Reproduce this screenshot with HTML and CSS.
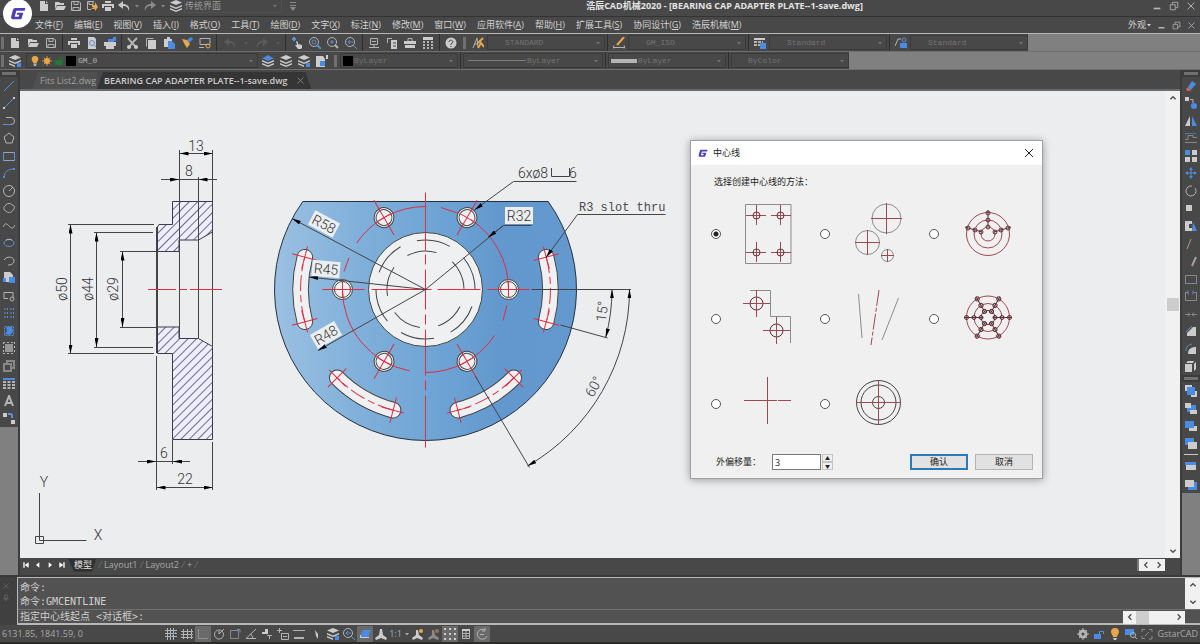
FILE: index.html
```
<!DOCTYPE html>
<html lang="zh-CN">
<head>
    <meta charset="UTF-8">
    <meta name="viewport" content="width=device-width, initial-scale=1.0">
    <title>浩辰CAD机械2020</title>
    <link rel="stylesheet" href="styles.css">
</head>
<body>
    <!-- Icon sprite, 12x12 grid -->
    <svg class="sprite" aria-hidden="true">
        <symbol id="i-new" viewBox="0 0 12 12"><path class="l" d="M2 1h5v3h3v7H2z"/><path class="l" d="M8 1l2 2H8z"/></symbol>
        <symbol id="i-open" viewBox="0 0 12 12"><path class="l" d="M1 2h4l1 1h4v2H3L1 9z"/><path class="l" d="M3 6h9l-2 4H1z"/></symbol>
        <symbol id="i-save" viewBox="0 0 12 12"><path class="sl" d="M1.500 1.500h7.500l1.500 1.500v7.500h-9zM4 1.500v3h4v-3M3 10.500V7.500h6v3"/></symbol>
        <symbol id="i-saveas" viewBox="0 0 12 12"><path class="sl" d="M8 1.500H1.500v8H5M3 1.500v3h4v-3"/><path class="o" d="M6 7V5h3V2l3 5-3 4V9H5l3-2z"/></symbol>
        <symbol id="i-print" viewBox="0 0 12 12"><path class="l" d="M3 1h6v2H3zM0 4h12v4h-2V6H2v2H0zM3 7h6v4H3z"/></symbol>
        <symbol id="i-preview" viewBox="0 0 12 12"><path class="l" d="M2 0h6l2 2v10H2z"/><circle class="sb" cx="6" cy="6" r="2.500"/><path class="sb" d="M8 8l2 2"/></symbol>
        <symbol id="i-publish" viewBox="0 0 12 12"><path class="l" d="M0 5h12v4H0zM2 9h8v3H2z"/><path class="b" d="M4 2h6v3H4zM9 0h3v4H9z"/></symbol>
        <symbol id="i-cut" viewBox="0 0 12 12"><path class="sl w2" d="M1 1l4 5 5-5M5 6l3 3M6 5L3 9"/><circle class="l" cx="2" cy="10" r="2"/><circle class="l" cx="9" cy="10" r="2"/></symbol>
        <symbol id="i-copy" viewBox="0 0 12 12"><path class="sl" d="M8.500 1.500h-7v8"/><path class="l" d="M3 3h8v9H3z"/></symbol>
        <symbol id="i-paste" viewBox="0 0 12 12"><path class="l" d="M1 2h3V0h3v2h2v8H1z"/><path class="b" d="M5 4h4l3 3v5H5z"/></symbol>
        <symbol id="i-match" viewBox="0 0 12 12"><path class="b" d="M6 3l4-3 2 2-4 4z"/><path class="o" d="M1 2l5 1 3 4-3 4-2-3z"/></symbol>
        <symbol id="i-block" viewBox="0 0 12 12"><path class="sl" d="M1 1.500h10v6H1zM0 10.500h5"/><circle class="so" cx="9" cy="9" r="2"/></symbol>
        <symbol id="i-undo" viewBox="0 0 12 12"><path class="f" d="M5 1L0 5l5 4V6c4 0 5 2 6 5 1-5-2-7-6-7z"/></symbol>
        <symbol id="i-redo" viewBox="0 0 12 12"><path class="f" d="M7 1l5 4-5 4V6C3 6 2 8 1 11 0 6 3 4 7 4z"/></symbol>
        <symbol id="i-caret" viewBox="0 0 12 12"><path class="f" d="M2 4h8L6 9z"/></symbol>
        <symbol id="i-pan" viewBox="0 0 12 12"><path class="sb w2" d="M1 2h4M3 0v4"/><path class="l" d="M5 4l2 1v2l4 1v3l-1 1H7L4 8h2z"/></symbol>
        <symbol id="i-zoom" viewBox="0 0 12 12"><circle class="sl" cx="5" cy="5" r="4.500"/><circle class="sb" cx="5" cy="5" r="2"/><path class="sb w2" d="M8 8l4 4"/></symbol>
        <symbol id="i-zoomwin" viewBox="0 0 12 12"><circle class="sl" cx="5" cy="5" r="4.500"/><path class="sl w2" d="M8 8l3 3"/><path class="sb" d="M3 5h4M5 3v4"/></symbol>
        <symbol id="i-zoomprev" viewBox="0 0 12 12"><circle class="sl" cx="5" cy="5" r="4.500"/><path class="sb" d="M3 5h5M5 3L3 5l2 2M8 8l4 4"/></symbol>
        <symbol id="i-props" viewBox="0 0 12 12"><path class="sl" d="M2.500 1.500h7v6h-7zM4 4.500h4M1 10.500h10M6 7v3"/></symbol>
        <symbol id="i-design" viewBox="0 0 12 12"><path class="sl" d="M1 1.500h5M1.500 1v5"/><path class="l" d="M5 3h6v9H5z"/><path class="sd" d="M7 6h3M7 9h3"/></symbol>
        <symbol id="i-toolbox" viewBox="0 0 12 12"><path class="l" d="M0 4h12v3H0zM1 8h10v3H1z"/><path class="sl" d="M4 4V1.500h4V4"/></symbol>
        <symbol id="i-calc" viewBox="0 0 12 12"><path class="l" d="M1 0h10v3H1z"/><path class="sl w2" d="M1 5h10M1 8h10M1 11h10" stroke-dasharray="2 2"/></symbol>
        <symbol id="i-help" viewBox="0 0 12 12"><circle class="l" cx="6" cy="6" r="5.500"/><path class="sd" d="M4 5c0-3 4-2 4 0L6 7v1M6 9v1"/></symbol>
        <symbol id="i-textstyle" viewBox="0 0 12 12"><path class="sl" d="M1 11L5 1l1 9M2 7h4"/><path class="so w2" d="M6 6l5-5M6 11l3-5 3 4"/></symbol>
        <symbol id="i-dimstyle" viewBox="0 0 12 12"><path class="so w2" d="M11 0L4 8"/><path class="sl" d="M0 10.500h12M1 8.500l-1 2 1 1M11 8.500l1 2-1 1"/></symbol>
        <symbol id="i-table" viewBox="0 0 12 12"><path class="b" d="M0 1h12v2H0z"/><path class="sl w2" d="M0 5h12M0 8h12M0 11h12" stroke-dasharray="3 1.500"/></symbol>
        <symbol id="i-tablestyle" viewBox="0 0 12 12"><path class="l" d="M0 1h11v2H0z"/><path class="sl w2" d="M0 5h9M0 8h9" stroke-dasharray="3 1"/><path class="b" d="M6 6h6v6H6z"/></symbol>
        <symbol id="i-mleader" viewBox="0 0 12 12"><path class="sl" d="M0 9l3-7h3"/><circle class="sb" cx="9" cy="3" r="2"/><path class="b" d="M5 6h7v5H5z"/></symbol>
        <symbol id="i-layers" viewBox="0 0 12 12"><path class="l" d="M6 0l6 2.500L6 5 0 2.500zM0 5l6 2.500L12 5v1.500L6 9 0 6.500zM0 8l6 2.500L12 8v1.500L6 12 0 9.500z"/></symbol>
        <symbol id="i-layerblue" viewBox="0 0 12 12"><path class="l" d="M0 5l6 2.500L12 5v1.500L6 9 0 6.500zM0 8l6 2.500L12 8v1.500L6 12 0 9.500z"/><path class="b" d="M6 0l3 2 3 1-6 3-6-3 3-1z"/></symbol>
        <symbol id="i-layerprops" viewBox="0 0 12 12"><path class="l" d="M6 0l6 2.500L6 5 0 2.500zM0 5l6 2.500L12 5v1.500L6 9 0 6.500zM0 8l6 2.500v1.500L0 9.500z"/><path class="b" d="M8 8h4v4H8z"/></symbol>
        <symbol id="i-layerfile" viewBox="0 0 12 12"><path class="l" d="M0 1h7l2 3v8H0zM10 0h2v4h-2z"/><path class="b" d="M4 6h5v5H4z"/></symbol>
        <symbol id="i-bulb" viewBox="0 0 12 12"><path class="o" d="M6 0c3 0 4 2 4 4S8 7 8 9H4c0-2-2-3-2-5s1-4 4-4z"/><path class="l" d="M4 10h4l-1 2H5z"/></symbol>
        <symbol id="i-sun" viewBox="0 0 12 12"><circle class="o" cx="6" cy="6" r="3.500"/><path class="so" d="M6 0v12M0 6h12M2 2l8 8M10 2l-8 8"/></symbol>
        <symbol id="i-lock" viewBox="0 0 12 12"><path class="g" d="M1 5h9v6H1z"/><path class="sg" d="M6 5V2.500h4.500V5"/></symbol>
        <symbol id="i-line" viewBox="0 0 12 12"><path class="sb" d="M1 11L11 1"/></symbol>
        <symbol id="i-xline" viewBox="0 0 12 12"><path class="sb" d="M1 11L11 1"/><path class="l" d="M0 10h2v2H0zM10 0h2v2h-2z"/></symbol>
        <symbol id="i-pline" viewBox="0 0 12 12"><path class="sb" d="M0 9.500h8"/><path class="sl" d="M3 2.500h5a3.500 3.500 0 010 7"/></symbol>
        <symbol id="i-polygon" viewBox="0 0 12 12"><path class="sl" d="M6 1l5 4-2 6H3L1 5z"/></symbol>
        <symbol id="i-rect" viewBox="0 0 12 12"><path class="sb" d="M.5 2.500h11v8H.5z"/><path class="sl dim" d="M.5 2.500h11M.5 10.500h11"/></symbol>
        <symbol id="i-arc" viewBox="0 0 12 12"><path class="sb" d="M1 11c0-6 4-9 10-9"/><path class="b" d="M0 9h2v2H0zM10 1h2v2h-2z"/></symbol>
        <symbol id="i-circle" viewBox="0 0 12 12"><circle class="sl" cx="6" cy="6" r="5.500"/><path class="sl" d="M6 6l4-4"/></symbol>
        <symbol id="i-cloud" viewBox="0 0 12 12"><path class="sl" d="M3 3c1-2 5-2 6 0 3 0 3 4 1 5-1 3-6 3-7 1-3-1-3-4 0-6z"/></symbol>
        <symbol id="i-spline" viewBox="0 0 12 12"><path class="sl" d="M0 7c2-5 4-3 6-1s4 4 6-1"/></symbol>
        <symbol id="i-ellipse" viewBox="0 0 12 12"><ellipse class="sb" cx="6" cy="6" rx="5" ry="3.500"/><path class="sl" d="M3 3c2-1 4-1 6 0"/></symbol>
        <symbol id="i-earc" viewBox="0 0 12 12"><path class="sl" d="M1 5c2-4 10-4 10 1 0 3-3 4-6 4"/></symbol>
        <symbol id="i-insert" viewBox="0 0 12 12"><path class="l" d="M1 0h6l3 3v7H1z"/><path class="b" d="M6 5h6v6H6zM0 6h3v4H0z"/></symbol>
        <symbol id="i-mkblock" viewBox="0 0 12 12"><path class="sl" d="M1 2.500h9v5M1 2.500v6h4"/><circle class="sl" cx="9" cy="9" r="2"/></symbol>
        <symbol id="i-points" viewBox="0 0 12 12"><path class="sb" d="M2 1v11M4.500 1v11M8 1v11M10.500 1v11" stroke-dasharray="2 2"/></symbol>
        <symbol id="i-hatch" viewBox="0 0 12 12"><path class="sb" d="M1.500 1.500h9v9h-9z" stroke-dasharray="2 1"/><path class="b" d="M3 2h6l1 5-3 3-5-1 2-3z"/></symbol>
        <symbol id="i-gradient" viewBox="0 0 12 12"><path class="l dim" d="M2 2h8v8H2z"/><path class="sl" d="M.5 0v12M11.500 0v12M0 .5h12M0 11.500h12" stroke-dasharray="2 2"/></symbol>
        <symbol id="i-region" viewBox="0 0 12 12"><path class="sl w2 dim" d="M1 4h7v7H1zM4 4V1h7v7H8"/></symbol>
        <symbol id="i-text" viewBox="0 0 12 12"><path class="sl w2" d="M2 11L6 1l4 10M3 8h6"/></symbol>
        <symbol id="i-move3" viewBox="0 0 12 12"><path class="l" d="M0 1h4v4H0zM8 8h4v4H8z"/><path class="sb w2" d="M5 2h3l1 1v3"/></symbol>
        <symbol id="i-erase" viewBox="0 0 12 12"><path class="b" d="M7 1l4 3-5 6-3-3z"/><path class="r" d="M3 7l3 3-1 1H2L1 9z"/></symbol>
        <symbol id="i-copyobj" viewBox="0 0 12 12"><path class="l" d="M0 0h4v4H0z"/><path class="sl" d="M5 2.500h3V6"/><circle class="b" cx="9" cy="9" r="3"/></symbol>
        <symbol id="i-mirror" viewBox="0 0 12 12"><path class="l" d="M5 1v10H0z"/><path class="b" d="M7 1v10h5z"/></symbol>
        <symbol id="i-offset" viewBox="0 0 12 12"><path class="sl dim" d="M0 10.500h12M0 7.500h3v-4h5v2h4"/><path class="sb dim" d="M0 4.500V1.500h11"/></symbol>
        <symbol id="i-array" viewBox="0 0 12 12"><path class="b" d="M0 0h5v5H0z"/><path class="l" d="M7 0h5v5H7zM0 7h5v5H0zM7 7h5v5H7z"/></symbol>
        <symbol id="i-move" viewBox="0 0 12 12"><path class="sb" d="M6 1v10M1 6h10"/><path class="b" d="M6 0l2 3H4zM6 12l2-3H4zM0 6l3-2v4zM12 6L9 4v4z"/></symbol>
        <symbol id="i-rotate" viewBox="0 0 12 12"><path class="sl" d="M3 2a5 5 0 107 1"/><path class="sl" d="M3 2a5 5 0 014-1"/></symbol>
        <symbol id="i-scale" viewBox="0 0 12 12"><path class="l" d="M1 3h6v6H1z"/></symbol>
        <symbol id="i-stretch" viewBox="0 0 12 12"><path class="l" d="M0 1h7v3H4v4h3v3H0z"/><path class="b" d="M8 2l4 9H7z"/></symbol>
        <symbol id="i-trim" viewBox="0 0 12 12"><path class="sp" d="M2 11L6 1"/></symbol>
        <symbol id="i-extend" viewBox="0 0 12 12"><path class="sp w2" d="M7 11l4-9"/></symbol>
        <symbol id="i-break" viewBox="0 0 12 12"><path class="sl dim" d="M.5 2.500h11v8H.5z"/><path class="sb dim" d="M4 10.500h8"/></symbol>
        <symbol id="i-break2" viewBox="0 0 12 12"><path class="sl dim" d="M3 2.500H.5v8h11v-8H9"/><path class="sb" d="M3 .5v4M8 .5v4"/></symbol>
        <symbol id="i-join" viewBox="0 0 12 12"><path class="sl dim" d="M0 6.500h5M7 6.500h5M3 4.500l2 2-2 2M9 4.500l-2 2 2 2"/></symbol>
        <symbol id="i-chamfer" viewBox="0 0 12 12"><path class="l" d="M2 11V8l6-6h3v9z"/><path class="sb" d="M1 7l6-6"/></symbol>
        <symbol id="i-fillet" viewBox="0 0 12 12"><path class="l" d="M3 11c0-5 3-7 8-7v7z"/><path class="sb" d="M1 8c0-4 2-6 6-7"/></symbol>
        <symbol id="i-explode" viewBox="0 0 12 12"><path class="l" d="M0 4h7v8H0zM1 3l2-2h6L8 3zM9 4l2-2v7l-2 2z"/></symbol>
        <symbol id="i-front" viewBox="0 0 12 12"><path class="l" d="M0 0h7v6H0zM6 6h6v6H6z"/><path class="b" d="M2 2h8v8H2z"/></symbol>
        <symbol id="i-back" viewBox="0 0 12 12"><path class="b" d="M2 3h9v7H2z"/><path class="l" d="M0 1h6v5H0zM5 8h7v4H5z"/></symbol>
        <symbol id="i-above" viewBox="0 0 12 12"><path class="l" d="M4 6h8v5H4z"/><path class="b" d="M0 1h9v7H0z"/></symbol>
        <symbol id="i-below" viewBox="0 0 12 12"><path class="b" d="M0 1h9v7H0z"/><path class="l" d="M3 5h9v7H3z"/></symbol>
        <symbol id="i-textfront" viewBox="0 0 12 12"><path class="l" d="M1 5h10v5H1z"/><path class="b" d="M0 2h11v3H0z"/></symbol>
        <symbol id="i-hatchback" viewBox="0 0 12 12"><path class="b" d="M3 4h9v8H3z"/><path class="l" d="M0 2h9v7H0z"/></symbol>
        <symbol id="i-min" viewBox="0 0 12 12"><path class="sl w2" d="M2 9h8"/></symbol>
        <symbol id="i-restore" viewBox="0 0 12 12"><path class="sl" d="M1.500 4.500h6v6h-6zM4 4V1.500h6.500V8H8"/></symbol>
        <symbol id="i-close" viewBox="0 0 12 12"><path class="sc" d="M2 2l8 8M10 2l-8 8"/></symbol>
        <symbol id="i-up" viewBox="0 0 12 12"><path class="sc w2" d="M2 8l4-4 4 4"/></symbol>
        <symbol id="i-down" viewBox="0 0 12 12"><path class="sc w2" d="M2 4l4 4 4-4"/></symbol>
        <symbol id="i-left" viewBox="0 0 12 12"><path class="sc w2" d="M8 2L4 6l4 4"/></symbol>
        <symbol id="i-right" viewBox="0 0 12 12"><path class="sc w2" d="M4 2l4 4-4 4"/></symbol>
        <symbol id="i-first" viewBox="0 0 12 12"><path class="w" d="M2 2h2v8H2zM10 2v8L4 6z"/></symbol>
        <symbol id="i-prev" viewBox="0 0 12 12"><path class="w" d="M8 2v8L3 6z"/></symbol>
        <symbol id="i-next" viewBox="0 0 12 12"><path class="w" d="M4 2v8l5-4z"/></symbol>
        <symbol id="i-last" viewBox="0 0 12 12"><path class="w" d="M8 2h2v8H8zM2 2v8l6-4z"/></symbol>
        <symbol id="i-snap" viewBox="0 0 12 12"><path class="sl" d="M2.500 0v12M5.500 0v12M8.500 0v12M0 2.500h12M0 5.500h12M0 8.500h12"/><path class="sb" d="M6 9l5-5"/></symbol>
        <symbol id="i-grid" viewBox="0 0 12 12"><path class="sl" d="M2.500 1v10M6.500 1v10M10.500 1v10M0 3.500h12M0 6.500h12M0 9.500h12"/></symbol>
        <symbol id="i-ortho" viewBox="0 0 12 12"><path class="sf dim" d="M1.500 1v9.500H11"/></symbol>
        <symbol id="i-polar" viewBox="0 0 12 12"><circle class="sl" cx="6" cy="6.500" r="4.500"/><path class="sl" d="M6 6l5-5M6 6V3"/></symbol>
        <symbol id="i-osnap" viewBox="0 0 12 12"><path class="sl dim" d="M1.500 2.500h8v8h-8z"/><path class="sb" d="M8 1.500h3v3"/></symbol>
        <symbol id="i-angle" viewBox="0 0 12 12"><path class="sl" d="M11 1L1 10.500h10M6 6l2 4"/></symbol>
        <symbol id="i-track" viewBox="0 0 12 12"><path class="l" d="M4 1h3v5H1V4h3z"/><path class="sl" d="M6 7.500h5M8.500 7v4"/></symbol>
        <symbol id="i-dyn" viewBox="0 0 12 12"><path class="sl" d="M0 2.500h5M2.500 0v5M4.500 5.500h7v6h-7zM6 8.500h4"/></symbol>
        <symbol id="i-lwt" viewBox="0 0 12 12"><path class="sl" d="M0 2.500h12"/><path class="sl w2" d="M1 10h10"/></symbol>
        <symbol id="i-cursor" viewBox="0 0 12 12"><path class="l" d="M5 2l3 4v5L6 8z"/></symbol>
        <symbol id="i-cube" viewBox="0 0 12 12"><path class="b" d="M4 2h8l-2 4H2z"/><path class="l" d="M1 7h9v3H1z"/><path class="b" d="M2 5h8v4H2z"/></symbol>
        <symbol id="i-annot" viewBox="0 0 12 12"><path class="l" d="M5 1h2l1 6 4 3-1 2-5-2-5 2-1-2 4-3z"/></symbol>
        <symbol id="i-annoton" viewBox="0 0 12 12"><path class="l" d="M4 2h2l1 5 4 3-1 2-5-2-4 2-1-2 4-3z"/><circle class="o" cx="9" cy="3" r="2"/></symbol>
        <symbol id="i-dots" viewBox="0 0 12 12"><path class="l" d="M0 0h2v2H0zM5 0h2v2H5zM10 0h2v2h-2zM0 5h2v2H0zM5 5h2v2H5zM10 5h2v2h-2zM0 10h2v2H0zM5 10h2v2H5zM10 10h2v2h-2z"/></symbol>
        <symbol id="i-list" viewBox="0 0 12 12"><path class="sl" d="M2.500 2.500h7v8h-7zM2 5.500h8M2 8h8M6 3v7"/><path class="l" d="M2 1h8v2H2z"/></symbol>
        <symbol id="i-cycle" viewBox="0 0 12 12"><path class="sl" d="M9 2a5 5 0 102 6M9 0v3H6M4 6.500h4"/></symbol>
        <symbol id="i-gear" viewBox="0 0 12 12"><circle class="sl w3" cx="6" cy="6" r="3"/><path class="sl" d="M6 0v3M6 9v3M0 6h3M9 6h3M2 2l2 2M8 8l2 2M10 2L8 4M4 8l-2 2"/></symbol>
        <symbol id="i-unlock" viewBox="0 0 12 12"><path class="b" d="M1 6h7v5H1z"/><path class="sb" d="M6.500 6V3.500h4V6"/></symbol>
        <symbol id="i-find" viewBox="0 0 12 12"><path class="b" d="M0 1h9v6H0z"/><circle class="sl" cx="8" cy="7" r="2.500"/><path class="sl" d="M10 9l2 2"/></symbol>
        <symbol id="i-full" viewBox="0 0 12 12"><path class="sl dim" d="M1 4V1.500h3M8 1.500h3V4M11 8v3H8M4 10.500H1V8M4 8l4-4"/></symbol>
        <symbol id="i-more" viewBox="0 0 12 12"><path class="sf" d="M3 2.500h6M3 5.500h6"/><path class="f" d="M3 7h6l-3 4z"/></symbol>
        <symbol id="i-pin" viewBox="0 0 12 12"><path class="sf" d="M4 1.500h4V7H4zM2 7.500h8M6 7v4"/></symbol>
        <symbol id="i-logo" viewBox="0 0 24 20"><path d="M8 1h15l-1 4H9.500L7 14h6l1-3h-4l1-3h9l-3 10H5c-3 0-4-2-3-5l2-8c1-3 2-4 4-4z"/></symbol>
    </svg>

    <header class="title-bar">
        <span class="app-logo"><svg><use href="#i-logo"/></svg></span>
        <div class="quick-access">
            <button aria-label="新建"><svg><use href="#i-new"/></svg></button>
            <button aria-label="打开"><svg><use href="#i-open"/></svg></button>
            <button aria-label="保存"><svg><use href="#i-save"/></svg></button>
            <button aria-label="另存为"><svg><use href="#i-saveas"/></svg></button>
            <button aria-label="打印"><svg><use href="#i-print"/></svg></button>
            <button aria-label="放弃"><svg><use href="#i-undo"/></svg></button>
            <button class="drop off" aria-label="放弃列表"><svg><use href="#i-caret"/></svg></button>
            <button class="off" aria-label="重做"><svg><use href="#i-redo"/></svg></button>
            <button class="drop off" aria-label="重做列表"><svg><use href="#i-caret"/></svg></button>
            <button aria-label="工作空间"><svg><use href="#i-layers"/></svg></button>
            <span class="combo workspace">
                <select aria-label="界面"><option>传统界面</option></select>
                <svg><use href="#i-caret"/></svg>
            </span>
            <button class="off more" aria-label="更多"><svg><use href="#i-more"/></svg></button>
        </div>
        <h1>浩辰CAD机械2020 - [BEARING CAP ADAPTER PLATE--1-save.dwg]</h1>
        <div class="window-buttons">
            <button aria-label="最小化"><svg><use href="#i-min"/></svg></button>
            <button aria-label="还原"><svg><use href="#i-restore"/></svg></button>
            <button aria-label="关闭"><svg><use href="#i-close"/></svg></button>
        </div>
    </header>

    <nav class="menu-bar">
        <button>文件(<u>F</u>)</button>
        <button>编辑(<u>E</u>)</button>
        <button>视图(<u>V</u>)</button>
        <button>插入(<u>I</u>)</button>
        <button>格式(<u>O</u>)</button>
        <button>工具(<u>T</u>)</button>
        <button>绘图(<u>D</u>)</button>
        <button>文字(<u>X</u>)</button>
        <button>标注(<u>N</u>)</button>
        <button>修改(<u>M</u>)</button>
        <button>窗口(<u>W</u>)</button>
        <button>应用软件(<u>A</u>)</button>
        <button>帮助(<u>H</u>)</button>
        <button>扩展工具(<u>S</u>)</button>
        <button>协同设计(<u>G</u>)</button>
        <button>浩辰机械(<u>M</u>)</button>
        <span class="menu-right">
            <button class="look">外观<svg><use href="#i-caret"/></svg></button>
            <button class="mdi" aria-label="最小化文档"><svg><use href="#i-min"/></svg></button>
            <button class="mdi" aria-label="还原文档"><svg><use href="#i-restore"/></svg></button>
            <button class="mdi" aria-label="关闭文档"><svg><use href="#i-close"/></svg></button>
        </span>
    </nav>

    <div class="tool-row">
        <div class="tools">
            <i class="grip"></i>
            <button aria-label="新建"><svg><use href="#i-new"/></svg></button>
            <button aria-label="打开"><svg><use href="#i-open"/></svg></button>
            <button aria-label="保存"><svg><use href="#i-save"/></svg></button>
            <i class="sep"></i>
            <button aria-label="打印"><svg><use href="#i-print"/></svg></button>
            <button aria-label="打印预览"><svg><use href="#i-preview"/></svg></button>
            <button aria-label="发布"><svg><use href="#i-publish"/></svg></button>
            <i class="sep"></i>
            <button aria-label="剪切"><svg><use href="#i-cut"/></svg></button>
            <button aria-label="复制"><svg><use href="#i-copy"/></svg></button>
            <button aria-label="粘贴"><svg><use href="#i-paste"/></svg></button>
            <button aria-label="特性匹配"><svg><use href="#i-match"/></svg></button>
            <button aria-label="块编辑器"><svg><use href="#i-block"/></svg></button>
            <i class="sep"></i>
            <button class="wide faint" aria-label="放弃"><svg><use href="#i-undo"/></svg></button>
            <button class="drop faint" aria-label="放弃列表"><svg><use href="#i-caret"/></svg></button>
            <button class="wide faint" aria-label="重做"><svg><use href="#i-redo"/></svg></button>
            <button class="drop faint" aria-label="重做列表"><svg><use href="#i-caret"/></svg></button>
            <i class="sep"></i>
            <button aria-label="平移"><svg><use href="#i-pan"/></svg></button>
            <button aria-label="实时缩放"><svg><use href="#i-zoom"/></svg></button>
            <button aria-label="窗口缩放"><svg><use href="#i-zoomwin"/></svg></button>
            <button aria-label="缩放上一个"><svg><use href="#i-zoomprev"/></svg></button>
            <i class="sep"></i>
            <button aria-label="特性"><svg><use href="#i-props"/></svg></button>
            <button aria-label="设计中心"><svg><use href="#i-design"/></svg></button>
            <button aria-label="工具选项板"><svg><use href="#i-toolbox"/></svg></button>
            <button aria-label="计算器"><svg><use href="#i-calc"/></svg></button>
            <i class="sep"></i>
            <button aria-label="帮助"><svg><use href="#i-help"/></svg></button>
            <i class="grip"></i>
            <button aria-label="文字样式"><svg><use href="#i-textstyle"/></svg></button>
            <span class="combo style"><select aria-label="文字样式"><option>STANDARD</option></select><svg><use href="#i-caret"/></svg></span>
            <i class="sep"></i>
            <button aria-label="标注样式"><svg><use href="#i-dimstyle"/></svg></button>
            <span class="combo style"><select aria-label="标注样式"><option>GM_ISO</option></select><svg><use href="#i-caret"/></svg></span>
            <i class="sep"></i>
            <button aria-label="表格样式"><svg><use href="#i-tablestyle"/></svg></button>
            <span class="combo style"><select aria-label="表格样式"><option>Standard</option></select><svg><use href="#i-caret"/></svg></span>
            <i class="sep"></i>
            <button aria-label="引线样式"><svg><use href="#i-mleader"/></svg></button>
            <span class="combo style"><select aria-label="引线样式"><option>Standard</option></select><svg><use href="#i-caret"/></svg></span>
        </div>
    </div>

    <div class="tool-row">
        <div class="tools">
            <i class="grip"></i>
            <button aria-label="图层特性"><svg><use href="#i-layerprops"/></svg></button>
            <span class="combo layer">
                <svg class="state"><use href="#i-bulb"/></svg>
                <svg class="state"><use href="#i-sun"/></svg>
                <svg class="state"><use href="#i-lock"/></svg>
                <i class="swatch"></i>
                <select aria-label="图层"><option>GM_0</option></select>
                <svg><use href="#i-caret"/></svg>
            </span>
            <button aria-label="置为当前图层"><svg><use href="#i-layerblue"/></svg></button>
            <button aria-label="上一个图层"><svg><use href="#i-layers"/></svg></button>
            <button aria-label="图层状态"><svg><use href="#i-layerprops"/></svg></button>
            <button aria-label="图层转换"><svg><use href="#i-layerfile"/></svg></button>
            <i class="grip"></i>
            <span class="combo prop"><i class="swatch"></i><select aria-label="颜色"><option>ByLayer</option></select><svg><use href="#i-caret"/></svg></span>
            <i class="sep"></i>
            <span class="combo linetype"><i class="thin-line"></i><select aria-label="线型"><option>ByLayer</option></select><svg><use href="#i-caret"/></svg></span>
            <i class="sep"></i>
            <span class="combo prop"><i class="thick-line"></i><select aria-label="线宽"><option>ByLayer</option></select><svg><use href="#i-caret"/></svg></span>
            <i class="sep"></i>
            <span class="combo prop plot"><select aria-label="打印样式"><option>ByColor</option></select><svg><use href="#i-caret"/></svg></span>
        </div>
    </div>

    <main class="workspace-area">
        <aside class="side left">
            <i class="grip-h"></i>
            <div class="side-group draw">
                <button aria-label="直线"><svg><use href="#i-line"/></svg></button>
                <button aria-label="构造线"><svg><use href="#i-xline"/></svg></button>
                <button aria-label="多段线"><svg><use href="#i-pline"/></svg></button>
                <button aria-label="多边形"><svg><use href="#i-polygon"/></svg></button>
                <button aria-label="矩形"><svg><use href="#i-rect"/></svg></button>
                <button aria-label="圆弧"><svg><use href="#i-arc"/></svg></button>
                <button aria-label="圆"><svg><use href="#i-circle"/></svg></button>
                <button aria-label="修订云线"><svg><use href="#i-cloud"/></svg></button>
                <button aria-label="样条曲线"><svg><use href="#i-spline"/></svg></button>
                <button aria-label="椭圆"><svg><use href="#i-ellipse"/></svg></button>
                <button aria-label="椭圆弧"><svg><use href="#i-earc"/></svg></button>
                <button aria-label="插入块"><svg><use href="#i-insert"/></svg></button>
                <button aria-label="创建块"><svg><use href="#i-mkblock"/></svg></button>
                <button aria-label="点"><svg><use href="#i-points"/></svg></button>
                <button aria-label="图案填充"><svg><use href="#i-hatch"/></svg></button>
                <button aria-label="渐变色"><svg><use href="#i-gradient"/></svg></button>
                <button aria-label="面域"><svg><use href="#i-region"/></svg></button>
                <button aria-label="表格"><svg><use href="#i-table"/></svg></button>
                <button aria-label="多行文字"><svg><use href="#i-text"/></svg></button>
                <button aria-label="添加选定对象"><svg><use href="#i-move3"/></svg></button>
            </div>
        </aside>

        <section class="document">
            <div class="doc-tabs">
                <button class="doc-tab">Fits List2.dwg</button>
                <button class="doc-tab active">BEARING CAP ADAPTER PLATE--1-save.dwg<svg><use href="#i-close"/></svg></button>
            </div>

            <div class="canvas">
                <svg class="drawing" width="660" height="467" viewBox="20 91 660 467">
                    <defs>
                        <marker id="arrow" viewBox="0 0 9 4" refX="9" refY="2" markerWidth="9" markerHeight="4" markerUnits="userSpaceOnUse" orient="auto-start-reverse"><path d="M9 2L0 0v4z"/></marker>
                        <pattern id="hatch" width="6" height="6" patternUnits="userSpaceOnUse" patternTransform="rotate(45)"><rect width="6" height="6" fill="#eeeefa"/><path d="M.5 0v6" stroke="#6c6c8c"/></pattern>
                        <linearGradient id="plate"><stop offset="0" stop-color="#9bc0e2"/><stop offset=".28" stop-color="#80b0da"/><stop offset=".55" stop-color="#6da3d4"/><stop offset=".75" stop-color="#6398ce"/><stop offset="1" stop-color="#6499cf"/></linearGradient>
                        <g id="slot">
                            <path class="void" d="M128.200 -34.300A132.700 132.700 0 0 1 128.200 34.300A7.800 7.800 0 0 1 113.100 30.300A117.100 117.100 0 0 0 113.100 -30.300A7.800 7.800 0 0 1 128.200 -34.300Z"/>
                            <path class="red" d="M120.700 -32.300A125 125 0 0 1 120.700 32.300" stroke-dasharray="16 4 7 4"/>
                            <path class="red" d="M112 0h26M125 -12v23" transform="rotate(15)"/>
                            <path class="red" d="M112 0h26M125 -11v23" transform="rotate(-15)"/>
                        </g>
                        <g id="hole">
                            <circle class="void" cx="83" r="10"/>
                            <circle class="void" cx="83" r="8"/>
                            <path class="red" d="M63 0h40M83 -8v16"/>
                        </g>
                    </defs>

                    <!-- Side section -->
                    <path class="cut" d="M172.500 201.500h40V232l-14 8H179v11.500h-21.500V227l1.500-2.500h13.500z"/>
                    <path class="cut" d="M157.500 327H179v11.500h19.500l14 8v93h-40v-86h-15z"/>
                    <path class="ink" d="M156.500 227v126M157.500 251v76M179.500 150v188M198.500 177v161M212.500 150v196"/>
                    <path class="red" d="M148 289.500h28M179 289.500h8M190 289.500h32"/>

                    <!-- Side dimensions -->
                    <path class="ink ends" d="M179.500 153.500H212.500"/>
                    <path class="ink end" d="M161 179.500H179"/>
                    <path class="ink end" d="M217 179.500H198.500"/>
                    <path class="ink" d="M179 179.500h20"/>
                    <path class="ink ends" d="M70.500 224.500V353.500"/>
                    <path class="ink ends" d="M96.500 232.500V347"/>
                    <path class="ink ends" d="M122.500 251.500V327"/>
                    <path class="ink" d="M68 224.500h86M68 353.500h86M94 232.500h59M94 347.500h59M120 251.500h38M120 327.500h38"/>
                    <path class="ink end" d="M138 461.500h18"/>
                    <path class="ink end" d="M190 461.500h-17"/>
                    <path class="ink" d="M156 461.500h17"/>
                    <path class="ink ends" d="M156.500 487.500h56"/>
                    <path class="ink" d="M156.500 356v134M172.500 440v24M212.500 442v48"/>
                    <text x="196" y="151">13</text>
                    <text x="189" y="176">8</text>
                    <text x="164" y="458">6</text>
                    <text x="185" y="484">22</text>
                    <text transform="translate(67 289) rotate(-90)">ø50</text>
                    <text transform="translate(93 289) rotate(-90)">ø44</text>
                    <text transform="translate(118 289) rotate(-90)">ø29</text>

                    <!-- Front view, origin at the bore centre -->
                    <g transform="translate(425.500 289.500)">
                        <path d="M-122.700 -88H122.700A151 151 0 1 1 -122.700 -88Z" fill="url(#plate)" stroke="#26303c"/>
                        <circle class="void" r="57"/>
                        <circle class="ink" r="49.500" stroke-dasharray="34 17.800" transform="rotate(-100)"/>
                        <circle class="ink" r="38.500" stroke-dasharray="30 18.400" transform="rotate(-118)"/>
                        <use href="#slot"/>
                        <use href="#slot" transform="rotate(60)"/>
                        <use href="#slot" transform="rotate(120)"/>
                        <use href="#slot" transform="rotate(180)"/>
                        <use href="#hole"/>
                        <use href="#hole" transform="rotate(60)"/>
                        <use href="#hole" transform="rotate(120)"/>
                        <use href="#hole" transform="rotate(180)"/>
                        <use href="#hole" transform="rotate(240)"/>
                        <use href="#hole" transform="rotate(300)"/>
                        <path class="red" d="M-68.800 -46.400A83 83 0 0 1 0 -83M-81.500 -18L-76.500 -31.700M-83 0A83 83 0 0 0 -16 81.400M0 83A83 83 0 0 0 69 46M77.500 31L81.500 15.500M83 0A83 83 0 0 0 45 -70M15.500 -82L32 -76.500"/>
                        <path class="red" d="M0 -97V-39M0 -35V-25M0 -20V20M0 25V35M0 40V86M0 91V101M0 106V158"/>
                        <path class="red" d="M-103 0h42M-54 0H6M12 0h43M62 0h42"/>
                        <path class="ink end" d="M0 0L-133.500 -71"/>
                        <path class="ink end" d="M0 0L-116.500 -12.500"/>
                        <path class="ink" d="M0 0L78 -64H106"/>
                        <path class="ink end" d="M78 -64L62.500 -52"/>
                        <path class="ink start" d="M49 -79.500L88 -108H151"/>
                        <path class="ink start" d="M120.500 -32L152 -75H240"/>
                        <path class="ink" d="M106 0h99.500M135 35.500L182 48.500M50 87L104 178"/>
                        <path class="ink ends" d="M186.500 0A186.500 186.500 0 0 1 180.200 48"/>
                        <path class="ink ends" d="M204 0A204 204 0 0 1 102 176.500"/>
                    </g>
                    <g class="tag" transform="translate(324 224) rotate(28)"><rect x="-14" y="-8" width="28" height="16"/><text y="5">R58</text></g>
                    <g class="tag" transform="translate(326 269) rotate(5)"><rect x="-14" y="-8" width="28" height="16"/><text y="5">R45</text></g>
                    <g class="tag" transform="translate(326 335) rotate(-30)"><rect x="-14" y="-8" width="28" height="16"/><text y="5">R48</text></g>
                    <path class="ink end" d="M425.500 289.500L318 350.500"/>
                    <g class="tag" transform="translate(519 216)"><rect x="-14" y="-9" width="28" height="17"/><text y="5">R32</text></g>
                    <text x="533" y="178">6xø8</text>
                    <path class="ink" d="M551.500 168v8.500H569.500V168"/>
                    <text x="573" y="178">6</text>
                    <text class="note" x="579" y="211">R3 slot thru</text>
                    <text transform="translate(607 312) rotate(-83)">15°</text>
                    <text transform="translate(598 389) rotate(-61)">60°</text>

                    <!-- UCS icon -->
                    <path class="ucs" d="M39.500 493v47.500h47M35.500 536.500h8v7h-8z"/>
                    <text x="44" y="487">Y</text>
                    <text x="98" y="540">X</text>
                </svg>

                <form class="dialog">
                    <div class="dialog-title">
                        <svg class="dialog-logo"><use href="#i-logo"/></svg>
                        <h2>中心线</h2>
                        <button type="button" aria-label="关闭"><svg><use href="#i-close"/></svg></button>
                    </div>
                    <p>选择创建中心线的方法：</p>
                    <div class="methods">
                        <label><input type="radio" name="method" aria-label="四孔" checked>
                            <svg><path class="k" d="M7.500 8.500H53v59H7.500z"/>
                                <path class="d" d="M8 19.500h20M33 19.500h20M8 56.500h20M33 56.500h20M18.500 9v20M42.500 9v20M18.500 46v20M42.500 46v20"/>
                                <g class="b"><circle cx="18.500" cy="19.500" r="3.500"/><circle cx="42.500" cy="19.500" r="3.500"/><circle cx="18.500" cy="56.500" r="3.500"/><circle cx="42.500" cy="56.500" r="3.500"/></g></svg>
                        </label>
                        <label><input type="radio" name="method" aria-label="多圆">
                            <svg><g class="k"><circle cx="39.500" cy="22.500" r="14.500"/><circle cx="20.500" cy="46.500" r="12"/><circle cx="40.500" cy="59.500" r="6"/></g>
                                <path class="d" d="M24 22.500h31M39.500 7v31M8 46.500h25M20.500 34v25M34 59.500h13M40.500 53v13"/></svg>
                        </label>
                        <label><input type="radio" name="method" aria-label="圆周部分">
                            <svg><g class="d"><circle cx="32" cy="38" r="21.500"/><circle cx="32" cy="38" r="14"/><circle cx="32" cy="38" r="7"/></g>
                                <path class="b" d="M32 14v17M9 31l17 5M55 31l-17 5"/>
                                <g class="b"><circle cx="32" cy="17" r="2"/><circle cx="32" cy="24" r="2"/><circle cx="32" cy="31" r="2"/><circle cx="12" cy="32" r="2"/><circle cx="19" cy="34" r="2"/><circle cx="25" cy="36" r="2"/><circle cx="52" cy="32" r="2"/><circle cx="45" cy="34" r="2"/><circle cx="39" cy="36" r="2"/></g></svg>
                        </label>
                        <label><input type="radio" name="method" aria-label="拐角">
                            <svg><path class="k" d="M12 9.500h20.500v26h20V62"/>
                                <g class="b"><circle cx="18.500" cy="22.500" r="6.500"/><circle cx="38.500" cy="49.500" r="6.500"/></g>
                                <path class="d" d="M5 22.500h27M18.500 9v27M25 49.500h27M38.500 36v27"/></svg>
                        </label>
                        <label><input type="radio" name="method" aria-label="两线之间">
                            <svg><path class="k" d="M11.500 13L15 57M51.500 17L35 59"/><path class="d" d="M32 9l-8 55" stroke-dasharray="16 2 4 2"/></svg>
                        </label>
                        <label><input type="radio" name="method" aria-label="圆周全部">
                            <svg><g class="d"><circle cx="32" cy="36.500" r="21.500"/><circle cx="32" cy="36.500" r="14"/></g>
                                <g class="b" transform="translate(32 36.500)">
                                    <circle r="7"/>
                                    <g id="spoke"><path d="M5 0h19"/><circle cx="7" r="2"/><circle cx="14" r="2"/><circle cx="21.500" r="2"/></g>
                                    <use href="#spoke" transform="rotate(60)"/>
                                    <use href="#spoke" transform="rotate(120)"/>
                                    <use href="#spoke" transform="rotate(180)"/>
                                    <use href="#spoke" transform="rotate(240)"/>
                                    <use href="#spoke" transform="rotate(300)"/>
                                </g></svg>
                        </label>
                        <label><input type="radio" name="method" aria-label="十字">
                            <svg><path class="d" d="M6 34.500h23M30 34.500h9M40 34.500h13M29.500 11v47"/></svg>
                        </label>
                        <label><input type="radio" name="method" aria-label="同心圆">
                            <svg><g class="ring"><circle cx="31.500" cy="36.500" r="22"/><circle cx="31.500" cy="36.500" r="17.500"/><circle cx="31.500" cy="36.500" r="6"/></g>
                                <path class="d" d="M9 36.500h45M31.500 14v45"/></svg>
                        </label>
                    </div>
                    <div class="dialog-footer">
                        <label for="offset">外偏移量：</label>
                        <input type="text" id="offset" value="3">
                        <span class="spinner">
                            <button type="button" aria-label="增加">▲</button>
                            <button type="button" aria-label="减少">▼</button>
                        </span>
                        <button type="submit" class="ok">确认</button>
                        <button type="button" class="cancel">取消</button>
                    </div>
                </form>

                <div class="v-scroll">
                    <button aria-label="向上"><svg><use href="#i-up"/></svg></button>
                    <i class="thumb"></i>
                    <button aria-label="向下"><svg><use href="#i-down"/></svg></button>
                </div>
            </div>

            <div class="layout-bar">
                <button class="nav" aria-label="第一个"><svg><use href="#i-first"/></svg></button>
                <button class="nav" aria-label="上一个"><svg><use href="#i-prev"/></svg></button>
                <button class="nav" aria-label="下一个"><svg><use href="#i-next"/></svg></button>
                <button class="nav" aria-label="最后一个"><svg><use href="#i-last"/></svg></button>
                <div class="layout-tabs">
                    <button class="active">模型</button><i>/</i>
                    <button>Layout1</button><i>/</i>
                    <button>Layout2</button><i>/</i>
                    <button>+</button><i>/</i>
                </div>
                <div class="h-scroll">
                    <button aria-label="向左"><svg><use href="#i-left"/></svg></button>
                    <button aria-label="向右"><svg><use href="#i-right"/></svg></button>
                </div>
            </div>
        </section>

        <aside class="side right">
            <i class="grip-h"></i>
            <div class="side-group modify">
                <button aria-label="删除"><svg><use href="#i-erase"/></svg></button>
                <button aria-label="复制"><svg><use href="#i-copyobj"/></svg></button>
                <button aria-label="镜像"><svg><use href="#i-mirror"/></svg></button>
                <button aria-label="偏移"><svg><use href="#i-offset"/></svg></button>
                <button aria-label="阵列"><svg><use href="#i-array"/></svg></button>
                <button aria-label="移动"><svg><use href="#i-move"/></svg></button>
                <button aria-label="旋转"><svg><use href="#i-rotate"/></svg></button>
                <button aria-label="缩放"><svg><use href="#i-scale"/></svg></button>
                <button aria-label="拉伸"><svg><use href="#i-stretch"/></svg></button>
                <button aria-label="修剪"><svg><use href="#i-trim"/></svg></button>
                <button aria-label="延伸"><svg><use href="#i-extend"/></svg></button>
                <button aria-label="打断于点"><svg><use href="#i-break"/></svg></button>
                <button aria-label="打断"><svg><use href="#i-break2"/></svg></button>
                <button aria-label="合并"><svg><use href="#i-join"/></svg></button>
                <button aria-label="倒角"><svg><use href="#i-chamfer"/></svg></button>
                <button aria-label="圆角"><svg><use href="#i-fillet"/></svg></button>
                <button aria-label="分解"><svg><use href="#i-explode"/></svg></button>
            </div>
            <i class="grip-h"></i>
            <div class="side-group order">
                <button aria-label="前置"><svg><use href="#i-front"/></svg></button>
                <button aria-label="后置"><svg><use href="#i-back"/></svg></button>
                <button aria-label="置于对象之上"><svg><use href="#i-above"/></svg></button>
                <button aria-label="置于对象之下"><svg><use href="#i-below"/></svg></button>
            </div>
            <i class="rule"></i>
            <div class="side-group annotate">
                <button aria-label="文字前置"><svg><use href="#i-textfront"/></svg></button>
                <button aria-label="填充后置"><svg><use href="#i-hatchback"/></svg></button>
            </div>
        </aside>
    </main>

    <section class="command">
        <div class="command-side">
            <button aria-label="关闭命令行"><svg><use href="#i-close"/></svg></button>
            <button aria-label="固定"><svg><use href="#i-pin"/></svg></button>
        </div>
        <div class="command-main">
            <div class="history">
                <div class="lines"><p>命令:</p><p>命令:GMCENTLINE</p></div>
                <div class="history-scroll">
                    <button aria-label="向上"><svg><use href="#i-up"/></svg></button>
                    <button aria-label="向下"><svg><use href="#i-down"/></svg></button>
                </div>
            </div>
            <div class="prompt">
                <label for="cmd">指定中心线起点 &lt;对话框&gt;:</label>
                <input type="text" id="cmd">
                <div class="prompt-scroll">
                    <button aria-label="向左"><svg><use href="#i-left"/></svg></button>
                    <i class="thumb"></i>
                    <button aria-label="向右"><svg><use href="#i-right"/></svg></button>
                </div>
            </div>
        </div>
    </section>

    <footer class="status-bar">
        <span class="coords">6131.85, 1841.59, 0</span>
        <div class="toggles">
            <button aria-label="捕捉"><svg><use href="#i-snap"/></svg></button>
            <button aria-label="栅格"><svg><use href="#i-grid"/></svg></button>
            <button class="on" aria-label="正交"><svg><use href="#i-ortho"/></svg></button>
            <button aria-label="极轴"><svg><use href="#i-polar"/></svg></button>
            <button aria-label="对象捕捉"><svg><use href="#i-osnap"/></svg></button>
            <button aria-label="角度捕捉"><svg><use href="#i-angle"/></svg></button>
            <button aria-label="对象追踪"><svg><use href="#i-track"/></svg></button>
            <button aria-label="动态输入"><svg><use href="#i-dyn"/></svg></button>
            <button aria-label="线宽"><svg><use href="#i-lwt"/></svg></button>
            <button class="cursor" aria-label="选择"><svg><use href="#i-cursor"/></svg></button>
            <button aria-label="图层"><svg><use href="#i-layerprops"/></svg></button>
            <button aria-label="缩放"><svg><use href="#i-zoomprev"/></svg></button>
            <button class="on" aria-label="模型空间"><svg><use href="#i-cube"/></svg></button>
            <button aria-label="注释"><svg><use href="#i-annot"/></svg></button>
            <button class="ratio">1:1<svg><use href="#i-caret"/></svg></button>
            <button aria-label="注释可见性"><svg><use href="#i-annoton"/></svg></button>
            <button class="off" aria-label="自动缩放"><svg><use href="#i-annoton"/></svg></button>
            <button class="on" aria-label="隔离对象"><svg><use href="#i-dots"/></svg></button>
            <button aria-label="快捷特性"><svg><use href="#i-list"/></svg></button>
            <button class="on" aria-label="选择循环"><svg><use href="#i-cycle"/></svg></button>
        </div>
        <div class="toggles tray">
            <button aria-label="设置"><svg><use href="#i-gear"/></svg></button>
            <button aria-label="锁定"><svg><use href="#i-unlock"/></svg></button>
            <button aria-label="提示"><svg><use href="#i-bulb"/></svg></button>
            <button aria-label="查找"><svg><use href="#i-find"/></svg></button>
            <button aria-label="全屏"><svg><use href="#i-full"/></svg></button>
            <span>GstarCAD</span>
        </div>
    </footer>
</body>
</html>
```
FILE: styles.css
```
* {
    box-sizing: border-box;
}

body {
    margin: 0;
    height: 100vh;
    display: flex;
    flex-direction: column;
    overflow: hidden;
    background: #484848;
    color: #c8c8c8;
    font-family: 'Open Sans', 'Noto Sans CJK SC', sans-serif;
    font-size: 9px;
    line-height: 12px;
}

button {
    display: flex;
    align-items: center;
    justify-content: center;
    padding: 0;
    border: none;
    background: none;
    color: inherit;
    font: inherit;
    white-space: nowrap;
}

button svg {
    width: 12px;
    height: 12px;
    flex: none;
}

h1, h2, p {
    margin: 0;
    font-size: inherit;
}

.sprite {
    position: absolute;
    width: 0;
    height: 0;
}

/* icon paints */
.l { fill: #cccccc; }
.b { fill: #4a8ce4; }
.o { fill: #eba64a; }
.g { fill: #1f7a35; }
.r { fill: #d0605c; }
.w { fill: #ffffff; }
.f { fill: currentColor; }
.sl, .sb, .so, .sg, .sp, .sd, .sc, .sf { fill: none; stroke-width: 1; }
.sl { stroke: #b4b4b4; }
.sb { stroke: #5b8fd6; }
.so { stroke: #eba64a; }
.sg { stroke: #1f7a35; }
.sp { stroke: #b09a94; }
.sd { stroke: #484848; }
.sc, .sf { stroke: currentColor; }
.w2 { stroke-width: 2; }
.w3 { stroke-width: 3; }
.dim { opacity: 0.6; }
.off { color: #8a8a8a; }
.faint { color: #5c5c5c; }

/* title bar */
.title-bar {
    position: relative;
    display: flex;
    align-items: center;
    height: 17px;
    flex: none;
    padding: 0 1px 4px 36px;
    border-bottom: 1px solid #333333;
}

.app-logo {
    position: absolute;
    left: 3px;
    top: -1px;
    z-index: 2;
    width: 29px;
    height: 29px;
    border-radius: 50%;
    background: #ffffff;
    display: flex;
    align-items: center;
    justify-content: center;
}

.app-logo svg {
    width: 16px;
    height: 14px;
    fill: #4a3fb5;
}

.quick-access {
    display: flex;
    align-items: center;
    height: 14px;
}

.quick-access button {
    width: 16px;
}

.quick-access .drop {
    width: 10px;
}

.quick-access .more {
    margin-left: 3px;
}

.quick-access button svg {
    width: 12px;
    height: 12px;
}

.drop svg, .quick-access .drop svg, .combo > svg:last-child, .look svg {
    width: 6px;
    height: 6px;
}

.title-bar h1 {
    flex: 1;
    text-align: center;
    color: #e4e4e4;
    font-weight: bold;
}

.window-buttons {
    display: flex;
}

.window-buttons button {
    width: 17px;
}

.window-buttons svg {
    width: 10px;
    height: 10px;
}

/* menu */
.menu-bar {
    display: flex;
    align-items: center;
    gap: 11px;
    height: 17px;
    flex: none;
    padding-left: 35px;
    border-bottom: 1px solid #b4b8b0;
    color: #d2d2d2;
}

.menu-right {
    display: flex;
    margin-left: auto;
    padding-right: 1px;
}

.look {
    margin-right: 2px;
}

.mdi {
    width: 15px;
    color: #b4bcc8;
}

.mdi svg {
    width: 9px;
    height: 9px;
}

/* toolbars */
.tool-row {
    display: flex;
    flex: none;
    height: 18px;
    background: #808080;
    border-bottom: 1px solid #6e6e6e;
}

.tools {
    display: flex;
    align-items: center;
    background: #484848;
}

.tools button {
    width: 18px;
    height: 17px;
}

.tools .wide {
    width: 22px;
}

.tools .drop {
    width: 10px;
}

.grip {
    width: 3px;
    height: 12px;
    margin: 0 2px 0 1px;
    background: #707070;
}

.tools button + .grip {
    margin: 0 3px;
}

.sep {
    width: 1px;
    height: 17px;
    margin: 0 2px;
    background: #2e2e2e;
}

.combo {
    display: flex;
    align-items: center;
    height: 15px;
    padding-right: 3px;
    border: 1px solid #3a3a3a;
    color: #737373;
}

.combo select {
    flex: 1;
    min-width: 0;
    appearance: none;
    padding: 0;
    border: none;
    background: none;
    color: inherit;
    font: 8px/12px 'Liberation Mono', monospace;
}

.combo.style {
    width: 118px;
    padding-left: 17px;
}

.combo.workspace {
    width: 98px;
    height: 14px;
    border-color: #505050;
}

.workspace select {
    color: #9c9c9c;
    font: 9px/12px 'Open Sans', 'Noto Sans CJK SC', sans-serif;
}

.combo.layer {
    width: 232px;
    margin: 0 1px 0 2px;
    padding-left: 3px;
    gap: 2px;
}

.combo.layer select {
    color: #b0b0b0;
}

.combo .state {
    width: 10px;
    height: 10px;
}

.combo.prop {
    width: 118px;
    padding-left: 2px;
    gap: 1px;
}

.combo.linetype {
    width: 140px;
    padding-left: 4px;
    gap: 1px;
}

.combo.prop.plot {
    padding-left: 16px;
}

.swatch {
    width: 10px;
    height: 10px;
    background: #000000;
}

.thin-line {
    width: 58px;
    height: 1px;
    background: #7c7c7c;
}

.thick-line {
    width: 26px;
    height: 4px;
    background: #b4b4b4;
}

/* main area */
.workspace-area {
    flex: 1;
    min-height: 0;
    display: flex;
}

.side {
    width: 20px;
    flex: none;
    background: #808080;
}

.side.left {
    border-right: 2px solid #3c3c3c;
}

.side.right {
    border-left: 2px solid #3c3c3c;
}

.grip-h {
    display: block;
    height: 7px;
    background: #707070;
    border: 2px solid #3c3c3c;
}

.rule {
    display: block;
    height: 5px;
    background: #c8c8c8;
    border: 2px solid #484848;
}

.side-group {
    display: grid;
    grid-auto-rows: 1fr;
    background: #484848;
}

.side-group button {
    width: 100%;
}

.draw { height: 350px; }
.modify { height: 298px; }
.order { height: 70px; }
.annotate { height: 36px; }

.document {
    flex: 1;
    min-width: 0;
    display: flex;
    flex-direction: column;
}

.doc-tabs {
    display: flex;
    align-items: flex-end;
    height: 21px;
    flex: none;
    padding-left: 12px;
    border-bottom: 2px solid #6a6a6a;
}

.doc-tab {
    height: 17px;
    padding: 0 1px 0 8px;
    background: #505050;
    color: #a0a0a0;
    clip-path: polygon(6px 0, 100% 0, 100% 100%, 0 100%);
}

.doc-tab.active {
    padding: 0 6px 0 7px;
    gap: 9px;
    background: #353535;
    color: #cccccc;
    font-weight: 600;
    clip-path: polygon(6px 0, calc(100% - 6px) 0, 100% 100%, 0 100%);
}

.doc-tab svg {
    width: 9px;
    height: 9px;
    color: #909090;
}

.canvas {
    position: relative;
    flex: 1;
    min-height: 0;
    display: flex;
    justify-content: space-between;
    background: #ebedef;
    overflow: hidden;
}

.drawing {
    flex: none;
}

.drawing text {
    fill: #333333;
    font-family: Roboto, sans-serif;
    font-weight: 300;
    font-size: 14px;
    text-anchor: middle;
}

.drawing .note {
    fill: #4a4a4a;
    font-family: 'Liberation Mono', monospace;
    font-size: 12px;
    text-anchor: start;
}

.drawing .ink {
    fill: none;
    stroke: #444444;
}

.drawing .red {
    fill: none;
    stroke: #e02c44;
}

.drawing .void {
    fill: #eef0f2;
    stroke: #444444;
}

.drawing .cut {
    fill: url(#hatch);
    stroke: #3a3a4a;
}

.drawing .tag rect {
    fill: #eceef0;
}

.drawing .ucs {
    fill: none;
    stroke: #444444;
}

.end, .ends {
    marker-end: url(#arrow);
}

.start, .ends {
    marker-start: url(#arrow);
}

/* scrollbars */
.v-scroll {
    display: flex;
    flex-direction: column;
    align-items: center;
    justify-content: space-between;
    width: 15px;
    padding: 3px 0;
    background: #f1f1f1;
    color: #505050;
}

.v-scroll svg, .history-scroll svg, .h-scroll svg, .prompt-scroll svg {
    width: 8px;
    height: 8px;
}

.v-scroll .thumb {
    width: 12px;
    height: 13px;
    margin-bottom: 40px;
    background: #cdcdcd;
}

/* layout tabs */
.layout-bar {
    display: flex;
    align-items: flex-start;
    height: 17px;
    flex: none;
}

.nav {
    width: 12px;
    height: 14px;
}

.nav svg {
    width: 8px;
    height: 8px;
}

.layout-tabs {
    display: flex;
    align-items: center;
    height: 14px;
    color: #a8a8a8;
}

.layout-tabs button {
    height: 13px;
}

.layout-tabs i {
    width: 8px;
    text-align: center;
    color: #707070;
}

.layout-tabs .active {
    padding: 0 4px 0 6px;
    background: #303030;
    color: #e0e0e0;
    clip-path: polygon(0 0, 100% 0, calc(100% - 4px) 100%, 6px 100%);
}

.h-scroll {
    display: flex;
    margin: 1px 15px 0 auto;
    border-left: 2px solid #7a7a7a;
    background: #f1f1f1;
    color: #505050;
}

.h-scroll button {
    width: 13px;
    height: 12px;
}

/* command line */
.command {
    display: flex;
    flex: none;
    height: 50px;
    border-top: 2px solid #3a3a3a;
}

.command-side {
    width: 17px;
    padding-top: 3px;
    background: #404040;
    color: #6c6c6c;
}

.command-side button {
    width: 12px;
    height: 12px;
}

.command-side svg {
    width: 8px;
    height: 8px;
}

.command-main {
    flex: 1;
    display: flex;
    flex-direction: column;
    border: solid #b8b8b8;
    border-width: 1px 0 2px 1px;
    background: #525252;
    color: #d0d0d0;
    font: 10px/14px 'DejaVu Sans Mono', 'Noto Sans CJK SC', monospace;
}

.history {
    display: flex;
    justify-content: space-between;
    height: 32px;
    border-bottom: 1px solid #707070;
}

.lines {
    padding: 3px 0 0 2px;
}

.history-scroll {
    display: flex;
    flex-direction: column;
    justify-content: space-between;
    width: 15px;
    padding: 3px 3px;
    background: #f1f1f1;
    color: #505050;
}

.prompt {
    display: flex;
    align-items: center;
    flex: 1;
    padding-left: 2px;
}

.prompt input {
    flex: 1;
    min-width: 0;
    height: 12px;
    padding: 0;
    border: none;
    background: none;
    color: inherit;
    font: inherit;
}

.prompt-scroll {
    display: flex;
    width: 62px;
    height: 13px;
    margin-right: 15px;
    background: #f1f1f1;
    color: #505050;
}

.prompt-scroll button {
    width: 13px;
}

.prompt-scroll .thumb {
    width: 13px;
    margin-right: auto;
    background: #cdcdcd;
}

/* status bar */
.status-bar {
    display: flex;
    align-items: center;
    height: 19px;
    flex: none;
    padding-left: 2px;
    border-bottom: 2px solid #2c2c28;
    color: #a8a8a8;
}

.coords {
    width: 161px;
}

.toggles {
    display: flex;
    align-items: center;
}

.toggles button {
    width: 16px;
    height: 16px;
}

.toggles .cursor {
    width: 18px;
}

.toggles button svg {
    width: 12px;
    height: 12px;
}

.toggles .ratio {
    width: 21px;
    gap: 2px;
}

.toggles .ratio svg {
    width: 6px;
    height: 6px;
}

.toggles .on {
    background: #6a6a6a;
}

.toggles .off {
    opacity: 0.5;
}

.tray {
    margin-left: auto;
    padding-right: 2px;
}

.tray span {
    margin-left: 2px;
}

/* centre line dialog */
.dialog {
    position: absolute;
    left: 670px;
    top: 49px;
    width: 353px;
    border: 1px solid #a0a0a4;
    background: #f0f0f0;
    box-shadow: 0 1px 8px rgba(0, 0, 0, 0.35);
    color: #222222;
}

.dialog-title {
    display: flex;
    align-items: center;
    gap: 5px;
    height: 24px;
    padding: 0 7px;
    background: #ffffff;
}

.dialog-title h2 {
    flex: 1;
    font-weight: normal;
}

.dialog-logo {
    width: 10px;
    height: 9px;
    fill: #4a3fb5;
}

.dialog p {
    padding: 11px 23px 8px;
}

.methods {
    display: grid;
    grid-template-columns: repeat(3, 109px);
    row-gap: 9px;
    padding-left: 20px;
}

.methods label {
    display: flex;
    align-items: center;
    gap: 17px;
}

.methods svg {
    width: 60px;
    height: 76px;
}

.methods .k, .methods .d, .methods .b, .methods .ring {
    fill: none;
    stroke: #8c8c8c;
}

.methods .d {
    stroke: #a04850;
}

.methods .b {
    stroke: #5c3038;
}

.methods .ring {
    stroke: #444444;
}

.methods input {
    appearance: none;
    width: 10px;
    height: 10px;
    margin: 0;
    border: 1px solid #555555;
    border-radius: 50%;
    background: #ffffff;
}

.methods input:checked {
    background: radial-gradient(#222222 2px, #ffffff 3px);
}

.dialog-footer {
    display: flex;
    align-items: center;
    padding: 12px 9px 8px 25px;
}

.dialog-footer label {
    width: 56px;
}

.dialog-footer input {
    width: 49px;
    height: 16px;
    padding: 0 2px;
    border: 1px solid #7a7a7a;
    background: #ffffff;
    color: #222222;
    font: inherit;
}

.spinner {
    margin: 0 auto 0 1px;
}

.spinner button {
    width: 11px;
    height: 8px;
    border: 1px solid #c4c4c4;
    font-size: 5px;
    line-height: 6px;
}

.ok, .cancel {
    width: 58px;
    height: 16px;
    border: 1px solid #b4b4b4;
    background: #e1e1e1;
}

.ok {
    margin-right: 7px;
    border: 2px solid #2a7ab8;
}
```
